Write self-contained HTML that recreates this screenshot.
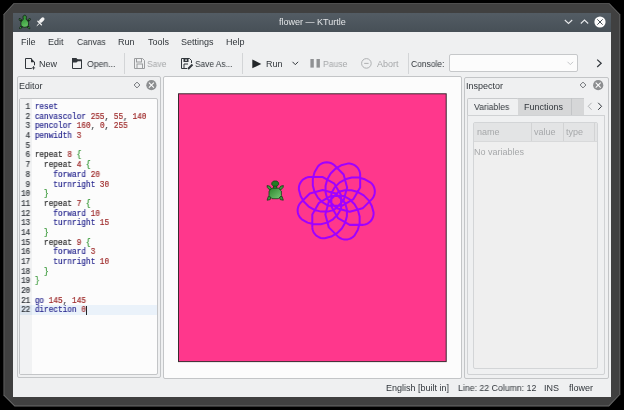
<!DOCTYPE html>
<html><head><meta charset="utf-8">
<style>
*{margin:0;padding:0;box-sizing:border-box}
html,body{width:624px;height:410px;overflow:hidden;background:#000}
body{position:relative;font-family:"Liberation Sans",sans-serif;font-size:9px;color:#31363b}
.a{position:absolute}
.t{position:absolute;white-space:nowrap;line-height:1;will-change:transform}
.dis{color:#a6a8aa}
#frame{left:0;top:0;width:624px;height:410px;background:#6a6a6a;clip-path:polygon(13.5px 3.2px,609.5px 3.2px,620.3px 14.5px,620.3px 394.5px,609px 406.4px,14.5px 406.4px,3.5px 395.5px,3.5px 14.2px)}
#frame2{left:0;top:0;width:624px;height:410px;background:#404040;clip-path:polygon(13.9px 4px,609.1px 4px,619.5px 14.8px,619.5px 394.2px,608.6px 405.6px,14.9px 405.6px,4.3px 395.1px,4.3px 14.5px)}
#win{left:13px;top:13px;width:598px;height:383.5px;background:#eff0f1}
#title{left:13px;top:13px;width:598px;height:18.5px;background:linear-gradient(#535c64,#475057)}
.panel{position:absolute;border:1px solid #c3c5c7;border-radius:2px}
.sep{position:absolute;width:1px;top:53px;height:21px;background:#d3d5d7}
svg{position:absolute;overflow:visible}
#code{position:absolute;left:19px;top:101.85px;font-family:"Liberation Mono",monospace;font-size:8.3px;line-height:9.69px;white-space:pre;transform:scaleX(0.934);transform-origin:0 0;will-change:transform;-webkit-text-stroke:0.18px}
.ln{position:absolute;left:0;width:12.1px;text-align:right;color:#31363b}
.cl{position:absolute;left:16.9px}
.kw{color:#26268e}.nm{color:#9c2626}.br{color:#2c922c}.rp{color:#262626}
</style></head><body><div id="wrap" style="position:absolute;left:0;top:0;width:624px;height:410px;filter:blur(0.3px)">
<div id="frame" class="a"></div>
<div id="frame2" class="a"></div>
<div id="win" class="a"></div>
<div id="title" class="a"></div>
<!-- titlebar icons -->
<svg style="left:16px;top:13px" width="18" height="18" viewBox="0 0 18 18">
 <defs><linearGradient id="tig" x1="0" y1="0" x2="0.3" y2="1"><stop offset="0" stop-color="#1f7f26"/><stop offset="1" stop-color="#5fc05f"/></linearGradient></defs>
 <path d="M3.8 6.3 L7.6 9.6 M13.6 6.3 L9.8 9.6 M4.2 15 L7 12.4 M13.2 15 L10.4 12.4" stroke="#16261a" stroke-width="2.3" stroke-linecap="round"/>
 <circle cx="4.1" cy="6.5" r="0.8" fill="#2f7d33"/><circle cx="13.3" cy="6.5" r="0.8" fill="#2f7d33"/>
 <circle cx="4.5" cy="14.7" r="0.8" fill="#3a9a3e"/><circle cx="12.9" cy="14.7" r="0.8" fill="#3a9a3e"/>
 <path d="M8.7 2.2 C9.9 2.2 10.6 3.3 10.4 4.6 L10.1 6.4 C11.9 7.4 12.6 9 12.6 10.9 C12.6 13.2 10.8 14.3 8.7 14.3 C6.6 14.3 4.8 13.2 4.8 10.9 C4.8 9 5.5 7.4 7.3 6.4 L7 4.6 C6.8 3.3 7.5 2.2 8.7 2.2 Z" fill="url(#tig)" stroke="#16261a" stroke-width="0.9"/>
</svg>
<svg style="left:33px;top:14px" width="16" height="16" viewBox="0 0 16 16">
 <path d="M9.8 5.0 L7.8 7.0" stroke="#f4f4f4" stroke-width="3.4" stroke-linecap="round"/>
 <path d="M4.9 7.3 L8.5 10.9" stroke="#f4f4f4" stroke-width="1.3" stroke-linecap="round"/>
 <path d="M6.4 9.4 L4.1 11.5" stroke="#f4f4f4" stroke-width="1" stroke-linecap="round"/>
</svg>
<div class="t" style="left:279px;top:18px;color:#e3e5e7">flower — KTurtle</div>
<svg style="left:564px;top:19px" width="9" height="6" viewBox="0 0 9 6"><path d="M0.8 1 L4.5 4.5 L8.2 1" fill="none" stroke="#e8eaec" stroke-width="1.05"/></svg>
<svg style="left:579.5px;top:19px" width="9" height="6" viewBox="0 0 9 6"><path d="M0.8 4.5 L4.5 1 L8.2 4.5" fill="none" stroke="#e8eaec" stroke-width="1.05"/></svg>
<svg style="left:593.5px;top:16px" width="12" height="12" viewBox="0 0 12 12"><circle cx="6" cy="6" r="5.6" fill="#fcfcfc"/><path d="M3.3 3.3 L8.7 8.7 M8.7 3.3 L3.3 8.7" stroke="#475057" stroke-width="1"/></svg>

<!-- menu -->
<div class="t" style="left:21.20px;top:38px">File</div>
<div class="t" style="left:48.00px;top:38px">Edit</div>
<div class="t" style="transform:scaleX(0.940);transform-origin:0 0;left:77.00px;top:38px">Canvas</div>
<div class="t" style="left:117.50px;top:38px">Run</div>
<div class="t" style="left:148px;top:38px">Tools</div>
<div class="t" style="left:180.50px;top:38px">Settings</div>
<div class="t" style="left:226.00px;top:38px">Help</div>

<!-- toolbar -->
<svg style="left:24px;top:57px" width="12" height="13" viewBox="0 0 12 13">
 <path d="M7.5 1.5 L1.5 1.5 L1.5 11.5 L7.8 11.5 M10.5 5 L10.5 8.3" fill="none" stroke="#31363b" stroke-width="1"/>
 <path d="M7 1 L7 5.2 L11 5.2 Z" fill="#31363b"/>
 <path d="M9.5 9.2 L9.5 12.6 M7.9 10.9 L11.1 10.9" stroke="#31363b" stroke-width="0.9"/>
</svg>
<div class="t" style="left:39.00px;top:59.8px">New</div>
<svg style="left:71px;top:57px" width="12" height="13" viewBox="0 0 12 13">
 <path d="M1.5 11.5 L1.5 1.5 L5 1.5 L6.5 3 L10.5 3 L10.5 11.5 Z" fill="none" stroke="#31363b" stroke-width="1"/>
 <path d="M1 1 L5.2 1 L6.7 2.5 L11 2.5 L11 4.3 L6.9 4.3 L5.4 5.6 L1 5.6 Z" fill="#31363b"/>
</svg>
<div class="t" style="transform:scaleX(0.965);transform-origin:0 0;left:87.00px;top:59.8px">Open...</div>
<div class="sep" style="left:124px"></div>
<svg style="left:133px;top:57px" width="13" height="13" viewBox="0 0 13 13">
 <path d="M1.5 1.5 L9.5 1.5 L11.5 3.5 L11.5 11.5 L1.5 11.5 Z" fill="none" stroke="#9a9c9e" stroke-width="1"/>
 <rect x="3.5" y="1.5" width="5" height="3.5" fill="none" stroke="#9a9c9e" stroke-width="1"/>
 <rect x="4" y="7" width="5.5" height="4.5" fill="none" stroke="#9a9c9e" stroke-width="1"/>
</svg>
<div class="t dis" style="transform:scaleX(0.950);transform-origin:0 0;left:147.30px;top:59.8px">Save</div>
<svg style="left:179.5px;top:57px" width="14" height="13" viewBox="0 0 14 13">
 <path d="M7 11.5 L1.5 11.5 L1.5 1.5 L9.5 1.5 L11.5 3.5 L11.5 6" fill="none" stroke="#31363b" stroke-width="1"/>
 <rect x="3.5" y="1.5" width="5" height="3.5" fill="#31363b"/>
 <rect x="5.3" y="2.4" width="1.5" height="1.5" fill="#eff0f1"/>
 <path d="M4 11 L4 7 L8 7" fill="none" stroke="#31363b" stroke-width="1"/>
 <path d="M8 12 L12.5 7.5" stroke="#31363b" stroke-width="2"/>
</svg>
<div class="t" style="transform:scaleX(0.925);transform-origin:0 0;left:194.90px;top:59.8px">Save As...</div>
<div class="sep" style="left:241.5px"></div>
<svg style="left:252px;top:58.5px" width="10" height="10" viewBox="0 0 10 10"><path d="M0.3 0.5 L9.3 4.9 L0.3 9.3 Z" fill="#232629"/></svg>
<div class="t" id="run2" style="left:265.80px;top:59.8px">Run</div>
<svg style="left:292px;top:61px" width="7" height="5" viewBox="0 0 7 5"><path d="M0.5 0.8 L3.3 3.7 L6.1 0.8" fill="none" stroke="#31363b" stroke-width="1"/></svg>
<svg style="left:309.5px;top:59px" width="11" height="9" viewBox="0 0 11 9"><rect x="0.4" y="0" width="3.4" height="8.6" fill="#8f9193"/><rect x="6.5" y="0" width="3.4" height="8.6" fill="#8f9193"/></svg>
<div class="t dis" style="transform:scaleX(0.955);transform-origin:0 0;left:323.20px;top:59.8px">Pause</div>
<svg style="left:361px;top:58px" width="11" height="11" viewBox="0 0 11 11"><circle cx="5.4" cy="5.4" r="4.8" fill="none" stroke="#a6a8aa" stroke-width="0.9"/><path d="M3.2 5.4 L7.6 5.4" stroke="#a6a8aa" stroke-width="0.9"/></svg>
<div class="t dis" style="left:377px;top:59.8px">Abort</div>
<div class="sep" style="left:408px"></div>
<div class="t" style="transform:scaleX(0.940);transform-origin:0 0;left:411.00px;top:59.8px">Console:</div>
<div class="a" style="left:449px;top:54px;width:128.5px;height:18px;background:#fcfcfc;border:1px solid #c6c8ca;border-radius:2px"></div>
<svg style="left:567px;top:61px" width="7" height="5" viewBox="0 0 7 5"><path d="M0.5 0.8 L3.3 3.6 L6.1 0.8" fill="none" stroke="#b8babc" stroke-width="0.8"/></svg>
<svg style="left:596px;top:59px" width="7" height="9" viewBox="0 0 7 9"><path d="M1.2 0.6 L5.2 4.3 L1.2 8" fill="none" stroke="#31363b" stroke-width="1.2"/></svg>

<!-- editor panel -->
<div class="panel" style="left:16.7px;top:76.2px;width:144px;height:301.6px;background:#eff0f1"></div>
<div class="t" style="left:18.60px;top:81.9px">Editor</div>
<svg style="left:132.6px;top:80.5px" width="8" height="8" viewBox="0 0 8 8"><path d="M4 1.1 L6.9 4 L4 6.9 L1.1 4 Z" fill="none" stroke="#6b6f73" stroke-width="0.95"/></svg>
<svg style="left:146px;top:79.5px" width="11" height="11" viewBox="0 0 11 11"><circle cx="5.4" cy="5.2" r="5.1" fill="#8c8e90"/><path d="M2.9 2.7 L7.9 7.7 M7.9 2.7 L2.9 7.7" stroke="#fcfcfc" stroke-width="1.05"/></svg>
<div class="panel" style="left:19px;top:97.5px;width:139px;height:277.5px;background:#fcfcfc"></div>
<div class="a" style="left:20px;top:98.8px;width:11.7px;height:275.2px;background:#f1f2f3"></div>
<div class="a" style="left:20px;top:305.2px;width:137px;height:9.7px;background:#eaf2fa"></div>
<div class="a" style="left:20px;top:305.2px;width:11.7px;height:9.7px;background:#dde6ef"></div>
<div class="a" style="left:85.6px;top:305.5px;width:1px;height:9px;background:#232629"></div>
<div id="code">
<div class="ln" style="top:0.00px">1</div>
<div class="cl" style="top:0.00px"><span class="kw">reset</span></div>
<div class="ln" style="top:9.69px">2</div>
<div class="cl" style="top:9.69px"><span class="kw">canvascolor</span> <span class="nm">255</span>, <span class="nm">55</span>, <span class="nm">140</span></div>
<div class="ln" style="top:19.38px">3</div>
<div class="cl" style="top:19.38px"><span class="kw">pencolor</span> <span class="nm">160</span>, <span class="nm">0</span>, <span class="nm">255</span></div>
<div class="ln" style="top:29.07px">4</div>
<div class="cl" style="top:29.07px"><span class="kw">penwidth</span> <span class="nm">3</span></div>
<div class="ln" style="top:38.76px">5</div>
<div class="cl" style="top:38.76px"></div>
<div class="ln" style="top:48.45px">6</div>
<div class="cl" style="top:48.45px"><span class="rp">repeat</span> <span class="nm">8</span> <span class="br">{</span></div>
<div class="ln" style="top:58.14px">7</div>
<div class="cl" style="top:58.14px">  <span class="rp">repeat</span> <span class="nm">4</span> <span class="br">{</span></div>
<div class="ln" style="top:67.83px">8</div>
<div class="cl" style="top:67.83px">    <span class="kw">forward</span> <span class="nm">20</span></div>
<div class="ln" style="top:77.52px">9</div>
<div class="cl" style="top:77.52px">    <span class="kw">turnright</span> <span class="nm">30</span></div>
<div class="ln" style="top:87.21px">10</div>
<div class="cl" style="top:87.21px">  <span class="br">}</span></div>
<div class="ln" style="top:96.90px">11</div>
<div class="cl" style="top:96.90px">  <span class="rp">repeat</span> <span class="nm">7</span> <span class="br">{</span></div>
<div class="ln" style="top:106.59px">12</div>
<div class="cl" style="top:106.59px">    <span class="kw">forward</span> <span class="nm">10</span></div>
<div class="ln" style="top:116.28px">13</div>
<div class="cl" style="top:116.28px">    <span class="kw">turnright</span> <span class="nm">15</span></div>
<div class="ln" style="top:125.97px">14</div>
<div class="cl" style="top:125.97px">  <span class="br">}</span></div>
<div class="ln" style="top:135.66px">15</div>
<div class="cl" style="top:135.66px">  <span class="rp">repeat</span> <span class="nm">9</span> <span class="br">{</span></div>
<div class="ln" style="top:145.35px">16</div>
<div class="cl" style="top:145.35px">    <span class="kw">forward</span> <span class="nm">3</span></div>
<div class="ln" style="top:155.04px">17</div>
<div class="cl" style="top:155.04px">    <span class="kw">turnright</span> <span class="nm">10</span></div>
<div class="ln" style="top:164.73px">18</div>
<div class="cl" style="top:164.73px">  <span class="br">}</span></div>
<div class="ln" style="top:174.42px">19</div>
<div class="cl" style="top:174.42px"><span class="br">}</span></div>
<div class="ln" style="top:184.11px">20</div>
<div class="cl" style="top:184.11px"></div>
<div class="ln" style="top:193.80px">21</div>
<div class="cl" style="top:193.80px"><span class="kw">go</span> <span class="nm">145</span>, <span class="nm">145</span></div>
<div class="ln" style="top:203.49px">22</div>
<div class="cl" style="top:203.49px"><span class="kw">direction</span> <span class="nm">0</span></div>
</div>

<!-- canvas panel -->
<div class="panel" style="left:163px;top:76px;width:298.5px;height:302.5px;background:#fcfcfc"></div>
<svg style="left:178px;top:93px" width="270" height="270" viewBox="0 0 270 270">
 <rect x="0.5" y="0.8" width="267.7" height="267.8" fill="#ff378c" stroke="#3a2a30" stroke-width="1"/>
 <g transform="translate(0.3,0.8) scale(0.67)">
  <polyline points="200.00,200.00 200.00,180.00 210.00,162.68 227.32,152.68 247.32,152.68 255.98,157.68 263.05,164.75 268.05,173.41 270.64,183.07 270.64,193.07 268.05,202.73 263.05,211.39 260.93,213.51 258.47,215.23 255.75,216.50 252.86,217.28 249.87,217.54 246.88,217.28 243.98,216.50 241.26,215.23 238.81,213.51 224.66,199.37 219.49,180.05 224.66,160.73 238.81,146.59 248.46,144.00 258.46,144.00 268.12,146.59 276.78,151.59 283.85,158.66 288.85,167.32 291.44,176.98 291.44,179.98 290.92,182.93 289.90,185.75 288.40,188.35 286.47,190.65 284.17,192.58 281.57,194.08 278.75,195.10 275.80,195.63 255.80,195.63 238.48,185.63 228.48,168.30 228.48,148.30 233.48,139.64 240.55,132.57 249.21,127.57 258.87,124.99 268.87,124.99 278.53,127.57 287.19,132.57 289.31,134.69 291.03,137.15 292.30,139.87 293.07,142.77 293.34,145.76 293.07,148.75 292.30,151.64 291.03,154.36 289.31,156.82 275.17,170.96 255.85,176.14 236.53,170.96 222.39,156.82 219.80,147.16 219.80,137.16 222.39,127.50 227.39,118.84 234.46,111.77 243.12,106.77 252.78,104.18 255.78,104.18 258.73,104.70 261.55,105.73 264.15,107.23 266.45,109.16 268.38,111.46 269.88,114.05 270.90,116.87 271.42,119.83 271.42,139.83 261.42,157.15 244.10,167.15 224.10,167.15 215.44,162.15 208.37,155.08 203.37,146.42 200.78,136.76 200.78,126.76 203.37,117.10 208.37,108.44 210.49,106.32 212.95,104.60 215.67,103.33 218.57,102.55 221.56,102.29 224.54,102.55 227.44,103.33 230.16,104.60 232.62,106.32 246.76,120.46 251.94,139.78 246.76,159.10 232.62,173.24 222.96,175.83 212.96,175.83 203.30,173.24 194.64,168.24 187.57,161.17 182.57,152.51 179.98,142.85 179.98,139.85 180.50,136.89 181.53,134.07 183.03,131.48 184.96,129.18 187.25,127.25 189.85,125.75 192.67,124.72 195.63,124.20 215.63,124.20 232.95,134.20 242.95,151.52 242.95,171.52 237.95,180.18 230.87,187.25 222.21,192.25 212.56,194.84 202.56,194.84 192.90,192.25 184.24,187.25 182.11,185.13 180.39,182.68 179.13,179.96 178.35,177.06 178.09,174.07 178.35,171.08 179.13,168.18 180.39,165.46 182.11,163.01 196.26,148.86 215.58,143.69 234.89,148.86 249.04,163.01 251.62,172.67 251.62,182.67 249.04,192.33 244.04,200.99 236.96,208.06 228.30,213.06 218.65,215.65 215.65,215.65 212.69,215.12 209.87,214.10 207.27,212.60 204.98,210.67 203.05,208.37 201.55,205.77 200.52,202.95 200.00,200.00" fill="none" stroke="#a000ff" stroke-width="3" stroke-linejoin="round"/>
 </g>
</svg>

<!-- turtle -->
<svg style="left:264px;top:178px" width="22" height="25" viewBox="0 0 22 25">
 <defs><linearGradient id="tg" x1="0" y1="0" x2="1" y2="1"><stop offset="0" stop-color="#2a852a"/><stop offset="1" stop-color="#78c878"/></linearGradient></defs>
 <path d="M3 7.6 L5.6 8.1 L7.3 10.4 L5.8 12 L3.4 9.6 Z M3.1 22.2 L4.3 18.4 L7 19 L6.2 21.6 Z M19.4 7.6 L16.8 8.1 L15.1 10.4 L16.6 12 L19.0 9.6 Z M19.3 22.2 L18.1 18.4 L15.4 19 L16.2 21.6 Z" fill="#3a9a3a" stroke="#173d17" stroke-width="0.8" stroke-linejoin="round"/>
 <rect x="9.6" y="7.4" width="3.2" height="3.4" fill="#2b8a2b" stroke="#173d17" stroke-width="0.8"/>
 <path d="M8 10.2 L14.4 10.2 L17.4 13.1 L17.4 17.7 L14.4 20.7 L8 20.7 L5 17.7 L5 13.1 Z" fill="url(#tg)" stroke="#173d17" stroke-width="0.8" stroke-linejoin="round"/>
 <path d="M9.5 3 L12.9 3 L14.6 4.8 L14.6 6.5 L13 8.2 L9.4 8.2 L7.8 6.5 L7.8 4.8 Z" fill="#237d23" stroke="#173d17" stroke-width="0.8" stroke-linejoin="round"/>
</svg>
<!-- inspector panel -->
<div class="panel" style="left:463.5px;top:76.5px;width:145px;height:302px;background:#eff0f1"></div>
<div class="t" style="left:466.00px;top:81.7px">Inspector</div>
<div class="a" style="left:467px;top:97.5px;width:51.5px;height:18.5px;background:#eff0f1;border:1px solid #c9cbcd;border-bottom:none;border-radius:2px 2px 0 0"></div>
<div class="a" style="left:518px;top:98px;width:66px;height:17.5px;background:#d6d7d8;border-top:1px solid #c9cbcd"></div>
<div class="a" style="left:570.5px;top:98px;width:1px;height:17.5px;background:#c3c5c7"></div>
<div class="t" style="transform:scaleX(0.960);transform-origin:0 0;left:474.10px;top:102.5px">Variables</div>
<div class="t" style="left:524.00px;top:102.5px">Functions</div>
<svg style="left:587px;top:102px" width="6" height="9" viewBox="0 0 6 9"><path d="M4.6 0.8 L1.2 4.3 L4.6 7.8" fill="none" stroke="#b0b2b4" stroke-width="1"/></svg>
<svg style="left:597px;top:102px" width="6" height="9" viewBox="0 0 6 9"><path d="M1.2 0.8 L4.6 4.3 L1.2 7.8" fill="none" stroke="#31363b" stroke-width="1"/></svg>
<div class="a" style="left:467px;top:115.3px;width:137.5px;height:60px;border:1px solid #c9cbcd;border-top:none"></div>
<div class="panel" style="left:467px;top:115.3px;width:137.5px;height:260px;background:#eff0f1;border-color:#d0d2d4;border-radius:0 0 2px 2px"></div>
<div class="a" style="left:473px;top:121.5px;width:125px;height:247.5px;background:#efefef;border:1px solid #d3d5d7;border-radius:2px"></div>
<div class="a" style="left:474px;top:122.5px;width:123px;height:19px;background:#e3e4e5;border-bottom:1px solid #d8d9da"></div>
<div class="a" style="left:530.5px;top:123px;width:1px;height:18px;background:#d2d3d4"></div>
<div class="a" style="left:562.5px;top:123px;width:1px;height:18px;background:#d2d3d4"></div>
<div class="a" style="left:593.5px;top:123px;width:1px;height:18px;background:#d2d3d4"></div>
<div class="t dis" style="left:477.10px;top:127.7px">name</div>
<div class="t dis" style="left:534.10px;top:127.7px">value</div>
<div class="t dis" style="left:566.10px;top:127.7px">type</div>
<div class="t dis" style="left:474.20px;top:147.5px">No variables</div>
<svg style="left:579.2px;top:80.5px" width="8" height="8" viewBox="0 0 8 8"><path d="M4 1.1 L6.9 4 L4 6.9 L1.1 4 Z" fill="none" stroke="#6b6f73" stroke-width="0.95"/></svg>
<svg style="left:593px;top:79.5px" width="11" height="11" viewBox="0 0 11 11"><circle cx="5.2" cy="5.2" r="5.1" fill="#8c8e90"/><path d="M2.7 2.7 L7.7 7.7 M7.7 2.7 L2.7 7.7" stroke="#fcfcfc" stroke-width="1.05"/></svg>


<!-- status bar -->
<div class="t" style="left:386.10px;top:383.8px">English [built in]</div>
<div class="t" style="transform:scaleX(0.973);transform-origin:0 0;left:458.10px;top:383.8px">Line: 22 Column: 12</div>
<div class="t" style="left:544.00px;top:383.8px">INS</div>
<div class="t" style="left:568.5px;top:383.8px">flower</div>
</div></body></html>
